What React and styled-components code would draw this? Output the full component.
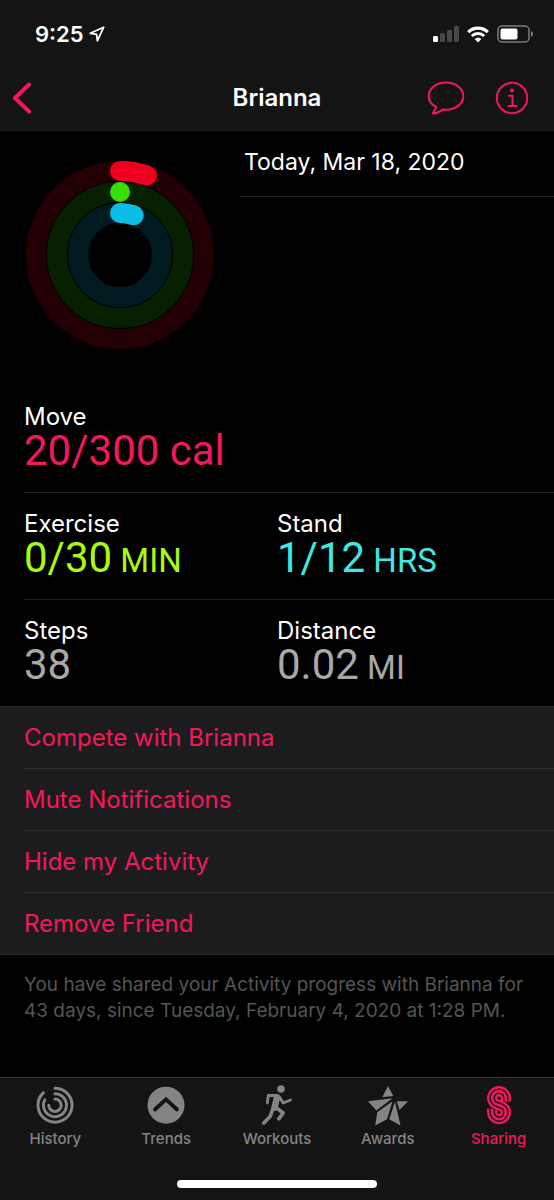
import React from "react";
import styled, { createGlobalStyle } from "styled-components";

const rings = [
  { name: "move", radius: 84, color: "#f0001f", track: "#220004", progress: 0.052 },
  { name: "exercise", radius: 63, color: "#37de05", track: "#072100", progress: 0 },
  { name: "stand", radius: 42, color: "#0bbfe4", track: "#001a21", progress: 0.053 },
];

const stats = [
  [{ label: "Move", value: "20/300 cal", color: "#f4185b" }],
  [
    { label: "Exercise", value: "0/30", unit: "MIN", color: "#a9fb0d" },
    { label: "Stand", value: "1/12", unit: "HRS", color: "#3ee7e1" },
  ],
  [
    { label: "Steps", value: "38", color: "#a9a9a9" },
    { label: "Distance", value: "0.02", unit: "MI", color: "#a9a9a9" },
  ],
];

const actions = [
  "Compete with Brianna",
  "Mute Notifications",
  "Hide my Activity",
  "Remove Friend",
];

const tabs = [
  { name: "History", Icon: HistoryIcon },
  { name: "Trends", Icon: TrendsIcon },
  { name: "Workouts", Icon: WorkoutsIcon },
  { name: "Awards", Icon: AwardsIcon },
  { name: "Sharing", Icon: SharingIcon, active: true },
];

export default function App() {
  return (
    <>
      <GlobalStyle />
      <Page>
        <Header>
          <StatusBar />
          <NavBar>
            <NavSide>
              <IconButton aria-label="Back">
                <svg width="20" height="32" viewBox="0 0 20 32" fill="none">
                  <path d="M17 2.500 3 16l14 13.500" stroke="currentColor" strokeWidth="4" strokeLinecap="round" strokeLinejoin="round" />
                </svg>
              </IconButton>
            </NavSide>
            <Title>Brianna</Title>
            <NavSide $end>
              <IconButton aria-label="Message">
                <MessageIcon />
              </IconButton>
              <IconButton aria-label="Info">
                <InfoIcon />
              </IconButton>
            </NavSide>
          </NavBar>
        </Header>

        <Main>
          <Summary>
            <RingsBox>
              <ActivityRings />
            </RingsBox>
            <DateText>Today, Mar 18, 2020</DateText>
          </Summary>

          {stats.map((row) => (
            <StatRow key={row[0].label}>
              {row.map((stat) => (
                <div key={stat.label}>
                  <StatLabel>{stat.label}</StatLabel>
                  <StatValue $color={stat.color}>
                    {stat.value}
                    {stat.unit && <Unit> {stat.unit}</Unit>}
                  </StatValue>
                </div>
              ))}
            </StatRow>
          ))}

          <ActionList>
            {actions.map((action) => (
              <li key={action}>
                <ActionButton>{action}</ActionButton>
              </li>
            ))}
          </ActionList>

          <Note>
            You have shared your Activity progress with Brianna for 43 days,
            since Tuesday, February 4, 2020 at 1:28 PM.
          </Note>
        </Main>

        <Footer>
          <TabBar>
            {tabs.map(({ name, Icon, active }) => (
              <Tab key={name} href={`#${name.toLowerCase()}`} $active={active}>
                <Icon />
                {name}
              </Tab>
            ))}
          </TabBar>
          <HomeIndicator />
        </Footer>
      </Page>
    </>
  );
}

function StatusBar() {
  return (
    <Status>
      <Clock>
        9:25
        <svg width="16" height="16" viewBox="0 0 16 16" fill="none">
          <path d="M14.700 1.200 1.300 7.300l6.300 1 .8 6.500z" stroke="currentColor" strokeWidth="1.800" strokeLinejoin="round" />
        </svg>
      </Clock>
      <StatusIcons>
        {/* signal */}
        <svg width="26" height="16" viewBox="0 0 26 16" fill="currentColor">
          <rect x="0" y="10" width="5" height="6" rx="1.200" />
          <g opacity="0.22">
            <rect x="7" y="7" width="5" height="9" rx="1.200" />
            <rect x="14" y="4" width="5" height="12" rx="1.200" />
            <rect x="21" y="0" width="5" height="16" rx="1.200" />
          </g>
        </svg>
        {/* wifi */}
        <svg width="22" height="17" viewBox="0 0 22 17" fill="none" stroke="currentColor">
          <path d="M1.200 6.200a14 14 0 0 1 19.600 0" strokeWidth="3.200" />
          <path d="M4.800 10a9 9 0 0 1 12.400 0" strokeWidth="2.800" />
          <path d="M7.600 13.100a5 5 0 0 1 6.800 0L11 16.600z" fill="currentColor" stroke="none" />
        </svg>
        {/* battery */}
        <svg width="36" height="18" viewBox="0 0 36 18" fill="none">
          <rect x="1" y="1" width="31" height="16" rx="4" stroke="currentColor" strokeOpacity="0.45" strokeWidth="1.500" />
          <rect x="3.500" y="3.500" width="17" height="11" rx="2" fill="currentColor" />
          <path d="M34 6v6c1.300-.5 2-1.700 2-3s-.7-2.500-2-3z" fill="currentColor" fillOpacity="0.45" />
        </svg>
      </StatusIcons>
    </Status>
  );
}

function ActivityRings() {
  return (
    <svg width="190" height="190" viewBox="0 0 190 190" fill="none" role="img" aria-label="Activity rings">
      {rings.map(({ name, radius, color, track, progress }) => {
        const angle = progress * 2 * Math.PI;
        const x = 95 + radius * Math.sin(angle);
        const y = 95 - radius * Math.cos(angle);
        return (
          <g key={name}>
            <circle cx="95" cy="95" r={radius} stroke={track} strokeWidth="20" />
            {progress > 0 ? (
              <path
                d={`M95 ${95 - radius}A${radius} ${radius} 0 0 1 ${x} ${y}`}
                stroke={color}
                strokeWidth="20"
                strokeLinecap="round"
              />
            ) : (
              <circle cx="95" cy={95 - radius} r="10" fill={color} />
            )}
          </g>
        );
      })}
    </svg>
  );
}

function MessageIcon() {
  return (
    <svg width="38" height="34" viewBox="0 0 38 34" fill="none">
      <path
        d="M19 1.500c9.700 0 17.300 6 17.300 13.700S28.700 28.800 19 28.800c-1.300 0-2.300-.1-3.400-.2-2.600 2.400-5.400 3.800-8.800 4 -.9 0-1-.8-.5-1.400 1.400-1.700 2.500-3.100 3-5.300C4.700 23.700 1.700 19.800 1.700 15.200 1.700 7.500 9.300 1.500 19 1.500z"
        stroke="currentColor"
        strokeWidth="2"
        strokeLinejoin="round"
      />
    </svg>
  );
}

function InfoIcon() {
  return (
    <svg width="34" height="34" viewBox="0 0 34 34" fill="none" stroke="currentColor" strokeWidth="2">
      <circle cx="17" cy="17" r="15.200" />
      <circle cx="17" cy="9.500" r="2" fill="currentColor" stroke="none" />
      <path d="M14 14.800h3.500v10M13.500 25h8" strokeLinecap="round" strokeLinejoin="round" />
    </svg>
  );
}

function HistoryIcon() {
  return (
    <svg width="40" height="40" viewBox="0 0 40 40" fill="none" stroke="currentColor" strokeWidth="3" strokeLinecap="round">
      <path d="M20 3.200a17 17 0 1 1-11.700 4.700" />
      <path d="M20 8.700a11.500 11.500 0 1 1-10.200 6.200" />
      <path d="M20 14a6.200 6.200 0 1 1-6.200 6.200" />
    </svg>
  );
}

function TrendsIcon() {
  return (
    <svg width="40" height="40" viewBox="0 0 40 40" fill="none">
      <circle cx="20" cy="20.200" r="18.500" fill="currentColor" />
      <path d="M9 24.500 20 14.300l11 10.200" stroke="#141414" strokeWidth="3.800" strokeLinecap="round" />
    </svg>
  );
}

function WorkoutsIcon() {
  return (
    <svg width="40" height="40" viewBox="0 0 40 40" fill="none" stroke="currentColor" strokeLinecap="round" strokeLinejoin="round">
      <circle cx="24" cy="4" r="3.800" fill="currentColor" stroke="none" />
      <path d="M10.300 17.800 11.300 10.500H19" strokeWidth="2.800" />
      <path d="M20 12.300l-2.500 10.500" strokeWidth="6.500" />
      <path d="M22.500 12l3.700 6 7.300-3" strokeWidth="2.800" />
      <path d="M15.800 24l-2.500 7.200L6.800 38" strokeWidth="3.600" />
      <path d="M19 22.500l7.200 5.500L21.800 33.800" strokeWidth="3.600" />
    </svg>
  );
}

function AwardsIcon() {
  return (
    <svg width="40" height="41" viewBox="0 0 40 41" fill="currentColor">
      <path d="M20 1 25.300 11 14.300 12.300z" />
      <path d="M0 16.200 24.500 13.200 8.400 25.500z" />
      <path d="M28.800 16.300H40L31.500 25z" />
      <path d="M24.500 16.300 19 34.300 7.200 40.500 9.300 27.300z" />
      <path d="M27 16.700 32.500 40.500 21.200 34.300z" />
    </svg>
  );
}

function SharingIcon() {
  const s = "M26.800 16.500V13A6.800 6.800 0 1 0 17.900 19.470L22.100 20.830A6.800 6.800 0 1 1 13.200 27.300V23.800";
  return (
    <svg width="40" height="40" viewBox="0 0 40 40" fill="none">
      <path d={s} stroke="currentColor" strokeWidth="10.400" />
      <path d={s} stroke="#141414" strokeWidth="5.600" />
      <path d={s} stroke="currentColor" strokeWidth="2.800" />
    </svg>
  );
}

const GlobalStyle = createGlobalStyle`
  * {
    box-sizing: border-box;
  }
  body {
    margin: 0;
    background: #000;
    color: #fff;
    font-family: Inter, "Liberation Sans", sans-serif;
  }
  button {
    padding: 0;
    border: 0;
    background: none;
    font: inherit;
    cursor: pointer;
  }
  svg {
    display: block;
    flex-shrink: 0;
  }
`;

const Page = styled.div`
  min-height: 100vh;
  display: flex;
  flex-direction: column;
`;

const Header = styled.header`
  background: #141414;
  border-bottom: 1px solid #1c1c1c;
`;

const Status = styled.div`
  display: flex;
  align-items: center;
  justify-content: space-between;
  padding: 20px 21px 0 35px;
`;

const Clock = styled.div`
  display: flex;
  align-items: center;
  gap: 5px;
  font-size: 22px;
  font-weight: 600;
  line-height: 28px;
`;

const StatusIcons = styled.div`
  display: flex;
  align-items: center;
  gap: 8px;
`;

const NavBar = styled.nav`
  display: grid;
  grid-template-columns: 1fr auto 1fr;
  align-items: center;
  height: 64px;
  margin-top: 18px;
  padding: 0 12px;
`;

const NavSide = styled.div`
  display: flex;
  align-items: center;
  justify-content: ${(props) => (props.$end ? "flex-end" : "flex-start")};
  gap: 30px;
  padding-right: ${(props) => (props.$end ? "13px" : "0")};
`;

const IconButton = styled.button`
  color: #f4185b;
`;

const Title = styled.h1`
  margin: 0;
  font-size: 24px;
  font-weight: 600;
  line-height: 32px;
`;

const Main = styled.main`
  flex: 1;
`;

const Summary = styled.section`
  display: flex;
  align-items: flex-start;
  padding-bottom: 36px;
`;

const RingsBox = styled.div`
  width: 240px;
  flex-shrink: 0;
  padding: 29px 0 0 25px;
`;

const DateText = styled.div`
  flex: 1;
  padding: 14px 0 17px 4px;
  border-bottom: 1px solid #1e1e1e;
  font-size: 23px;
  line-height: 34px;
`;

const StatRow = styled.section`
  display: grid;
  grid-template-columns: 1fr 1fr;
  margin-left: 24px;
  padding: 17px 24px 21px 0;

  & + & {
    border-top: 1px solid #1e1e1e;
  }
`;

const StatLabel = styled.div`
  font-size: 24px;
  line-height: 28px;
`;

const StatValue = styled.div`
  font-family: Roboto, "Liberation Sans", sans-serif;
  font-size: 42px;
  line-height: 40px;
  color: ${(props) => props.$color};
`;

const Unit = styled.span`
  font-size: 33px;
  line-height: 1;
`;

const ActionList = styled.ul`
  margin: 0;
  padding: 0 0 0 24px;
  list-style: none;
  background: #1c1c1e;
  border-top: 1px solid #2b2b2d;
  border-bottom: 1px solid #2b2b2d;

  li + li {
    border-top: 1px solid #2f2f31;
  }
`;

const ActionButton = styled.button`
  display: block;
  width: 100%;
  color: #f4185b;
  font-size: 24px;
  line-height: 61px;
  text-align: left;
`;

const Note = styled.p`
  margin: 0;
  padding: 17px 24px;
  color: #555;
  font-size: 19px;
  line-height: 26px;
`;

const Footer = styled.footer`
  background: #141414;
  border-top: 1px solid #343434;
`;

const TabBar = styled.nav`
  display: grid;
  grid-template-columns: repeat(5, 1fr);
  padding-top: 7px;
`;

const Tab = styled.a`
  display: flex;
  flex-direction: column;
  align-items: center;
  justify-content: space-between;
  height: 64px;
  color: ${(props) => (props.$active ? "#f4185b" : "#848484")};
  font-size: 15px;
  font-weight: 500;
  line-height: 20px;
  text-decoration: none;
`;

const HomeIndicator = styled.div`
  width: 36%;
  height: 8px;
  margin: 31px auto 12px;
  border-radius: 4px;
  background: #fff;
`;
